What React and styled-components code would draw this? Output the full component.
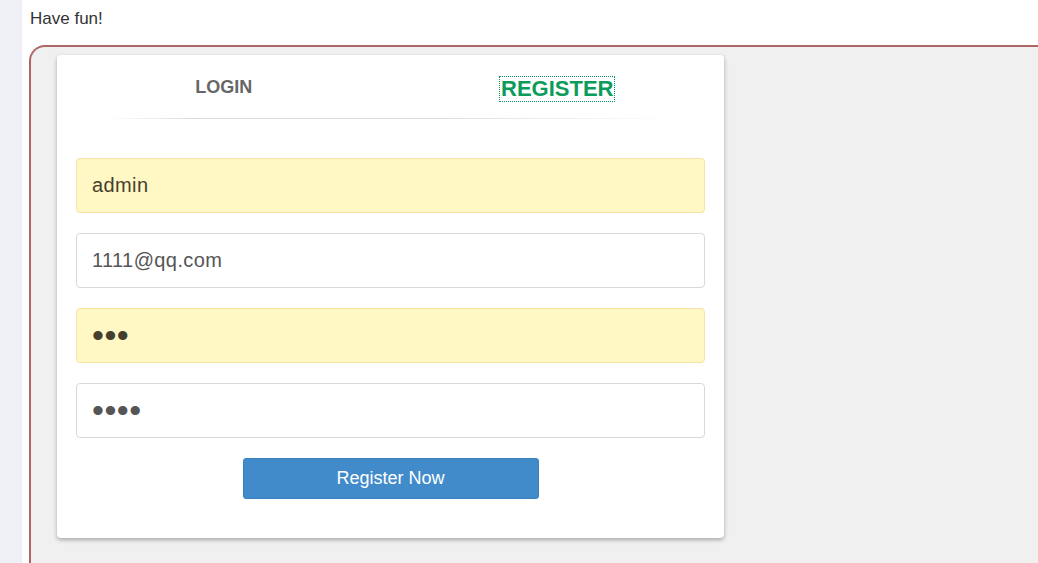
import styled, { createGlobalStyle } from "styled-components";
import React from "react";

const GlobalStyle = createGlobalStyle`
  html, body {
    margin: 0;
    padding: 0;
    background: #fff;
    font-family: "Liberation Sans", Arial, sans-serif;
  }
`;

const Page = styled.div`
  display: flex;
  height: 563px;
`;

const SideStrip = styled.div`
  width: 22px;
  flex-shrink: 0;
  background: #eff0f5;
`;

const Main = styled.div`
  flex: 1;
  display: flex;
  flex-direction: column;
  padding: 10px 0 0 7px;
`;

const Greeting = styled.div`
  font-size: 17px;
  line-height: 18px;
  color: #333;
  margin: 0 0 17px 1px;
`;

const Frame = styled.div`
  flex: 1;
  box-sizing: border-box;
  border: 2px solid #b06666;
  border-right: none;
  border-bottom: none;
  border-radius: 16px 0 0 0;
  background: #f0f0f0;
  padding: 8px 0 0 26px;
`;

const Card = styled.div`
  width: 667px;
  box-sizing: border-box;
  background: #fff;
  border-radius: 4px;
  box-shadow: 0 2px 4px rgba(0, 0, 0, 0.3);
  padding-bottom: 39px;
`;

const Tabs = styled.div`
  display: flex;
  height: 63px;
  align-items: center;
`;

const Tab = styled.div`
  flex: 1;
  display: flex;
  justify-content: center;
`;

const TabLabel = styled.span`
  font-weight: bold;
  font-size: ${(p) => (p.$active ? "22px" : "18px")};
  line-height: ${(p) => (p.$active ? "22px" : "20px")};
  color: ${(p) => (p.$active ? "#0b9c5c" : "#666")};
  outline: ${(p) => (p.$active ? "1px dotted #0b9c5c" : "none")};
  outline-offset: 1px;
  margin-top: ${(p) => (p.$active ? "5px" : "0")};
`;

const Divider = styled.div`
  height: 1px;
  margin: 0 48px;
  background: linear-gradient(
    to right,
    rgba(221, 221, 221, 0),
    #dcdcdc 15%,
    #dedede 60%,
    rgba(221, 221, 221, 0)
  );
`;

const Form = styled.form`
  display: flex;
  flex-direction: column;
  gap: 20px;
  padding: 39px 19px 0;
`;

const Field = styled.input`
  height: 55px;
  box-sizing: border-box;
  width: 100%;
  padding: 0 15px;
  border-radius: 4px;
  border: 1px solid ${(p) => (p.$filled ? "#f6e3a5" : "#d9d9d9")};
  background: ${(p) => (p.$filled ? "#fff7c4" : "#fff")};
  color: ${(p) => (p.$filled ? "#463f2f" : "#555")};
  font-family: "Liberation Sans", Arial, sans-serif;
  font-size: 20px;
  letter-spacing: 0.4px;
  outline: none;

  &[type="password"] {
    font-size: 34px;
    letter-spacing: 0.5px;
  }
`;

const ButtonRow = styled.div`
  display: flex;
  justify-content: center;
`;

const SubmitButton = styled.button`
  width: 296px;
  height: 41px;
  background: #428bca;
  border: 1px solid #3a80bf;
  border-radius: 3px;
  color: #fff;
  font-family: "Liberation Sans", Arial, sans-serif;
  font-size: 18px;
`;

export default function App() {
  return (
    <>
      <GlobalStyle />
      <Page>
        <SideStrip />
        <Main>
          <Greeting>Have fun!</Greeting>
          <Frame>
            <Card>
              <Tabs>
                <Tab>
                  <TabLabel>LOGIN</TabLabel>
                </Tab>
                <Tab>
                  <TabLabel $active>REGISTER</TabLabel>
                </Tab>
              </Tabs>
              <Divider />
              <Form onSubmit={(e) => e.preventDefault()}>
                <Field $filled type="text" defaultValue="admin" readOnly />
                <Field type="text" defaultValue="1111@qq.com" readOnly />
                <Field $filled type="password" defaultValue="111" readOnly />
                <Field type="password" defaultValue="1111" readOnly />
                <ButtonRow>
                  <SubmitButton type="submit">Register Now</SubmitButton>
                </ButtonRow>
              </Form>
            </Card>
          </Frame>
        </Main>
      </Page>
    </>
  );
}
